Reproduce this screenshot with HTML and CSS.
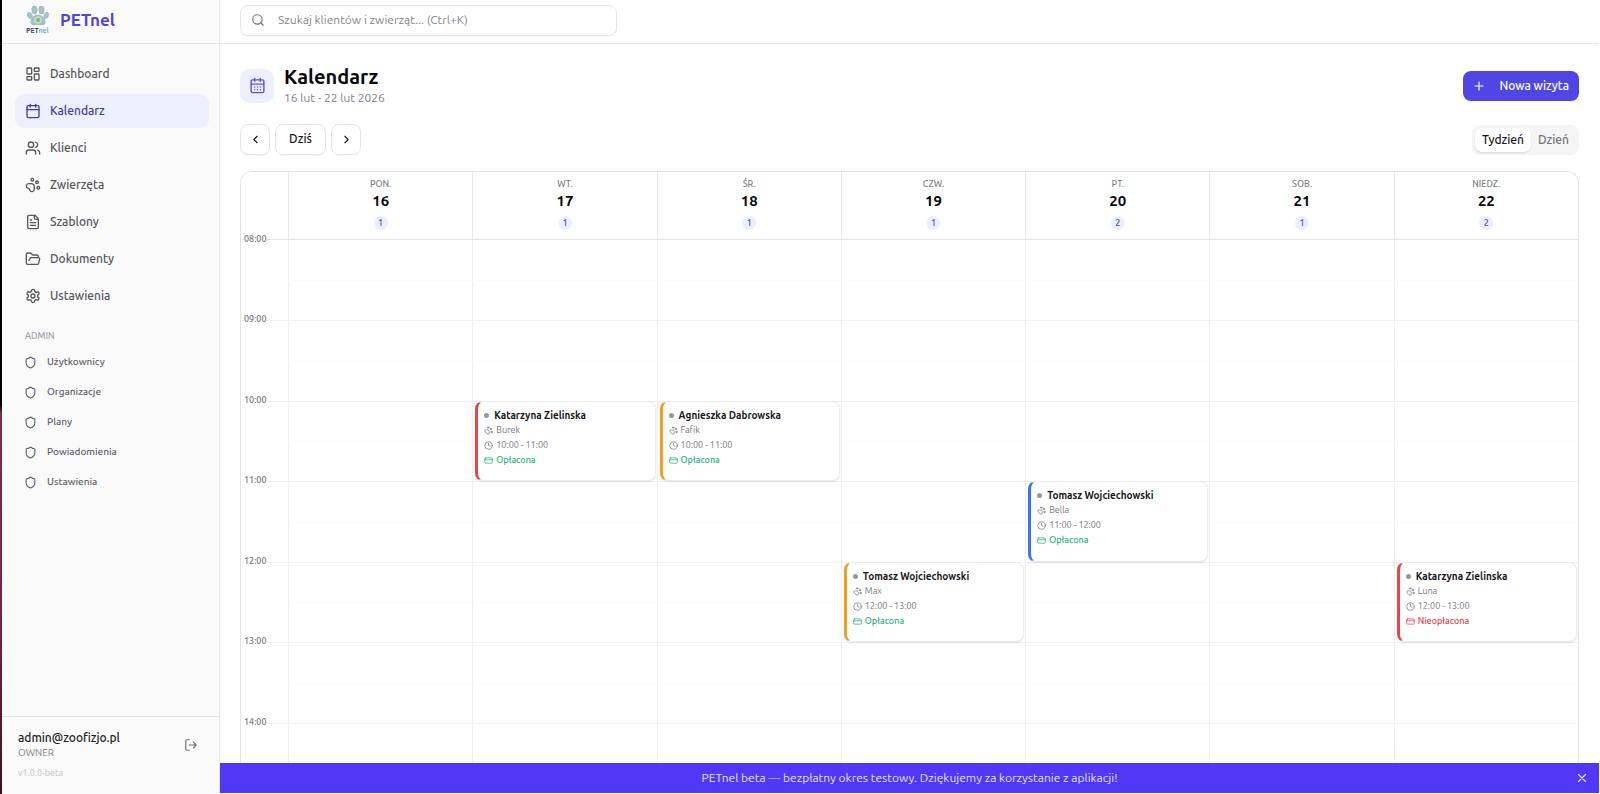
FILE: index.html
```html
<!DOCTYPE html>
<html lang="pl">
<head>
<meta charset="utf-8">
<meta name="viewport" content="width=device-width, initial-scale=1">
<title>PETnel – Kalendarz</title>
<link rel="stylesheet" href="styles.css">
</head>
<body>
<svg class="sprite" aria-hidden="true">
  <symbol id="i-dashboard" viewBox="0 0 24 24"><rect x="3" y="3" width="7" height="9" rx="1"/><rect x="14" y="3" width="7" height="5" rx="1"/><rect x="14" y="12" width="7" height="9" rx="1"/><rect x="3" y="16" width="7" height="5" rx="1"/></symbol>
  <symbol id="i-calendar" viewBox="0 0 24 24"><path d="M8 2v4M16 2v4M3 10h18"/><rect x="3" y="4" width="18" height="18" rx="2"/></symbol>
  <symbol id="i-days" viewBox="0 0 24 24"><path d="M8 2v4M16 2v4M3 10h18"/><rect x="3" y="4" width="18" height="18" rx="2"/><path d="M8 14h.01M12 14h.01M16 14h.01M8 18h.01M12 18h.01M16 18h.01"/></symbol>
  <symbol id="i-users" viewBox="0 0 24 24"><path d="M16 21v-2a4 4 0 0 0-4-4H6a4 4 0 0 0-4 4v2"/><circle cx="9" cy="7" r="4"/><path d="M22 21v-2a4 4 0 0 0-3-3.87M16 3.13a4 4 0 0 1 0 7.75"/></symbol>
  <symbol id="i-paw" viewBox="0 0 24 24"><circle cx="11" cy="4" r="2"/><circle cx="18" cy="8" r="2"/><circle cx="20" cy="16" r="2"/><path d="M9 10a5 5 0 0 1 5 5v3.500a3.500 3.500 0 0 1-6.840 1.045Q6.520 17.480 4.460 16.840A3.500 3.500 0 0 1 5.500 10Z"/></symbol>
  <symbol id="i-file" viewBox="0 0 24 24"><path d="M15 2H6a2 2 0 0 0-2 2v16a2 2 0 0 0 2 2h12a2 2 0 0 0 2-2V7Z"/><path d="M14 2v4a2 2 0 0 0 2 2h4M10 9H8M16 13H8M16 17H8"/></symbol>
  <symbol id="i-folder" viewBox="0 0 24 24"><path d="m6 14 1.500-2.900A2 2 0 0 1 9.240 10H20a2 2 0 0 1 1.940 2.500l-1.540 6a2 2 0 0 1-1.950 1.500H4a2 2 0 0 1-2-2V5a2 2 0 0 1 2-2h3.900a2 2 0 0 1 1.690.9l.81 1.200a2 2 0 0 0 1.670.9H18a2 2 0 0 1 2 2v2"/></symbol>
  <symbol id="i-gear" viewBox="0 0 24 24"><path d="M12.220 2h-.44a2 2 0 0 0-2 2v.18a2 2 0 0 1-1 1.730l-.43.25a2 2 0 0 1-2 0l-.15-.08a2 2 0 0 0-2.730.73l-.22.38a2 2 0 0 0 .73 2.730l.15.1a2 2 0 0 1 1 1.720v.51a2 2 0 0 1-1 1.740l-.15.09a2 2 0 0 0-.73 2.730l.22.38a2 2 0 0 0 2.730.73l.15-.08a2 2 0 0 1 2 0l.43.25a2 2 0 0 1 1 1.730V20a2 2 0 0 0 2 2h.44a2 2 0 0 0 2-2v-.18a2 2 0 0 1 1-1.730l.43-.25a2 2 0 0 1 2 0l.15.08a2 2 0 0 0 2.730-.73l.22-.39a2 2 0 0 0-.73-2.730l-.15-.08a2 2 0 0 1-1-1.740v-.5a2 2 0 0 1 1-1.740l.15-.09a2 2 0 0 0 .73-2.730l-.22-.38a2 2 0 0 0-2.730-.73l-.15.08a2 2 0 0 1-2 0l-.43-.25a2 2 0 0 1-1-1.730V4a2 2 0 0 0-2-2z"/><circle cx="12" cy="12" r="3"/></symbol>
  <symbol id="i-shield" viewBox="0 0 24 24"><path d="M20 13c0 5-3.500 7.500-7.660 8.950a1 1 0 0 1-.67-.01C7.500 20.500 4 18 4 13V6a1 1 0 0 1 1-1c2 0 4.500-1.200 6.240-2.720a1.170 1.170 0 0 1 1.520 0C14.510 3.810 17 5 19 5a1 1 0 0 1 1 1z"/></symbol>
  <symbol id="i-logout" viewBox="0 0 24 24"><path d="M9 21H5a2 2 0 0 1-2-2V5a2 2 0 0 1 2-2h4M16 17l5-5-5-5M21 12H9"/></symbol>
  <symbol id="i-search" viewBox="0 0 24 24"><circle cx="11" cy="11" r="8"/><path d="m21 21-4.300-4.300"/></symbol>
  <symbol id="i-left" viewBox="0 0 24 24"><path d="m15 18-6-6 6-6"/></symbol>
  <symbol id="i-right" viewBox="0 0 24 24"><path d="m9 18 6-6-6-6"/></symbol>
  <symbol id="i-plus" viewBox="0 0 24 24"><path d="M5 12h14M12 5v14"/></symbol>
  <symbol id="i-close" viewBox="0 0 24 24"><path d="M18 6 6 18M6 6l12 12"/></symbol>
  <symbol id="i-clock" viewBox="0 0 24 24"><circle cx="12" cy="12" r="10"/><path d="M12 6v6l4 2"/></symbol>
  <symbol id="i-card" viewBox="0 0 24 24"><rect x="2" y="5" width="20" height="14" rx="2"/><path d="M2 10h20"/></symbol>
</svg>
<div class="app">
  <div class="edge"></div>
  <aside class="sidebar">
    <div class="brand">
      <svg class="logo" viewBox="0 0 24 30" role="img" aria-label="PETnel">
        <defs><linearGradient id="paw" x1="0" y1="0" x2="1" y2="1"><stop offset="0" stop-color="#a3b0c8"/><stop offset=".5" stop-color="#a9c5c4"/><stop offset="1" stop-color="#94b9cf"/></linearGradient></defs>
        <g fill="url(#paw)"><ellipse cx="8.500" cy="5" rx="3" ry="4.200"/><ellipse cx="15.500" cy="5" rx="3" ry="4.200"/><ellipse cx="3.800" cy="10.500" rx="2.600" ry="3.600" transform="rotate(-25 3.800 10.500)"/><ellipse cx="20.200" cy="10.500" rx="2.600" ry="3.600" transform="rotate(25 20.200 10.500)"/><path d="M12 9.500c4 0 7.500 4 7.500 7.500 0 2.600-2 3.500-4 3.300-1.300-.2-2.200-.3-3.500-.3s-2.200.1-3.500.3c-2 .2-4-.7-4-3.300 0-3.500 3.500-7.500 7.500-7.500z"/></g>
        <circle cx="12" cy="15" r="3.800" fill="#c3dac8"/><circle cx="12" cy="15" r="2" fill="#7fb98b"/>
        <text class="logo-text" x="0" y="28"><tspan fill="#3c4668">PET</tspan><tspan fill="#69b5bd">nel</tspan></text>
      </svg>
      <span class="brand-name">PETnel</span>
    </div>
    <nav class="nav">
      <a class="nav-item" href="#"><svg class="icon i16"><use href="#i-dashboard"/></svg>Dashboard</a>
      <a class="nav-item active" href="#" aria-current="page"><svg class="icon i16"><use href="#i-calendar"/></svg>Kalendarz</a>
      <a class="nav-item" href="#"><svg class="icon i16"><use href="#i-users"/></svg>Klienci</a>
      <a class="nav-item" href="#"><svg class="icon i16"><use href="#i-paw"/></svg>Zwierzęta</a>
      <a class="nav-item" href="#"><svg class="icon i16"><use href="#i-file"/></svg>Szablony</a>
      <a class="nav-item" href="#"><svg class="icon i16"><use href="#i-folder"/></svg>Dokumenty</a>
      <a class="nav-item" href="#"><svg class="icon i16"><use href="#i-gear"/></svg>Ustawienia</a>
    </nav>
    <h2 class="nav-label">ADMIN</h2>
    <nav class="subnav">
      <a class="sub-item" href="#"><svg class="icon i13"><use href="#i-shield"/></svg>Użytkownicy</a>
      <a class="sub-item" href="#"><svg class="icon i13"><use href="#i-shield"/></svg>Organizacje</a>
      <a class="sub-item" href="#"><svg class="icon i13"><use href="#i-shield"/></svg>Plany</a>
      <a class="sub-item" href="#"><svg class="icon i13"><use href="#i-shield"/></svg>Powiadomienia</a>
      <a class="sub-item" href="#"><svg class="icon i13"><use href="#i-shield"/></svg>Ustawienia</a>
    </nav>
    <footer class="account">
      <div class="account-row">
        <div><p class="email">admin@zoofizjo.pl</p><p class="role">OWNER</p></div>
        <button class="logout" type="button" aria-label="Wyloguj"><svg class="icon i14"><use href="#i-logout"/></svg></button>
      </div>
      <p class="version">v1.0.0-beta</p>
    </footer>
  </aside>
  <div class="page">
    <header class="topbar">
      <label class="search"><svg class="icon i14"><use href="#i-search"/></svg><input type="search" aria-label="Szukaj" placeholder="Szukaj klientów i zwierząt... (Ctrl+K)"></label>
    </header>
    <main class="content">
      <div class="title-row">
        <span class="title-icon"><svg class="icon i17"><use href="#i-days"/></svg></span>
        <div class="title-text"><h1 class="title">Kalendarz</h1><p class="range">16 lut - 22 lut 2026</p></div>
        <button class="primary" type="button"><svg class="icon i14"><use href="#i-plus"/></svg>Nowa wizyta</button>
      </div>
      <div class="toolbar">
        <button class="btn square" type="button" aria-label="Poprzedni"><svg class="icon i13"><use href="#i-left"/></svg></button>
        <button class="btn" type="button">Dziś</button>
        <button class="btn square" type="button" aria-label="Następny"><svg class="icon i13"><use href="#i-right"/></svg></button>
        <div class="toggle"><button class="seg on" type="button">Tydzień</button><button class="seg" type="button">Dzień</button></div>
      </div>
      <section class="calendar">
        <div class="days">
          <div class="day corner"></div>
          <div class="day"><span class="dow">PON.</span><span class="num">16</span><span class="count">1</span></div>
          <div class="day"><span class="dow">WT.</span><span class="num">17</span><span class="count">1</span></div>
          <div class="day"><span class="dow">ŚR.</span><span class="num">18</span><span class="count">1</span></div>
          <div class="day"><span class="dow">CZW.</span><span class="num">19</span><span class="count">1</span></div>
          <div class="day"><span class="dow">PT.</span><span class="num">20</span><span class="count">2</span></div>
          <div class="day"><span class="dow">SOB.</span><span class="num">21</span><span class="count">1</span></div>
          <div class="day"><span class="dow">NIEDZ.</span><span class="num">22</span><span class="count">2</span></div>
        </div>
        <div class="hours">
          <div class="column c1"></div><div class="column c2"></div><div class="column c3"></div><div class="column c4"></div><div class="column c5"></div><div class="column c6"></div><div class="column c7"></div>
          <div class="line half r2"></div><div class="line r3"></div><div class="line half r4"></div><div class="line r5"></div><div class="line half r6"></div><div class="line r7"></div><div class="line half r8"></div><div class="line r9"></div><div class="line half r10"></div><div class="line r11"></div><div class="line half r12"></div><div class="line r13"></div>
          <time class="hour r1">08:00</time><time class="hour r3">09:00</time><time class="hour r5">10:00</time><time class="hour r7">11:00</time><time class="hour r9">12:00</time><time class="hour r11">13:00</time><time class="hour r13">14:00</time>
          <article class="event red d2 r5">
            <h3 class="client">Katarzyna Zielinska</h3>
            <p class="meta"><svg class="icon i9"><use href="#i-paw"/></svg>Burek</p>
            <p class="meta"><svg class="icon i9"><use href="#i-clock"/></svg>10:00 - 11:00</p>
            <p class="meta paid"><svg class="icon i9"><use href="#i-card"/></svg>Opłacona</p>
          </article>
          <article class="event amber d3 r5">
            <h3 class="client">Agnieszka Dabrowska</h3>
            <p class="meta"><svg class="icon i9"><use href="#i-paw"/></svg>Fafik</p>
            <p class="meta"><svg class="icon i9"><use href="#i-clock"/></svg>10:00 - 11:00</p>
            <p class="meta paid"><svg class="icon i9"><use href="#i-card"/></svg>Opłacona</p>
          </article>
          <article class="event amber d4 r9">
            <h3 class="client">Tomasz Wojciechowski</h3>
            <p class="meta"><svg class="icon i9"><use href="#i-paw"/></svg>Max</p>
            <p class="meta"><svg class="icon i9"><use href="#i-clock"/></svg>12:00 - 13:00</p>
            <p class="meta paid"><svg class="icon i9"><use href="#i-card"/></svg>Opłacona</p>
          </article>
          <article class="event blue d5 r7">
            <h3 class="client">Tomasz Wojciechowski</h3>
            <p class="meta"><svg class="icon i9"><use href="#i-paw"/></svg>Bella</p>
            <p class="meta"><svg class="icon i9"><use href="#i-clock"/></svg>11:00 - 12:00</p>
            <p class="meta paid"><svg class="icon i9"><use href="#i-card"/></svg>Opłacona</p>
          </article>
          <article class="event red d7 r9">
            <h3 class="client">Katarzyna Zielinska</h3>
            <p class="meta"><svg class="icon i9"><use href="#i-paw"/></svg>Luna</p>
            <p class="meta"><svg class="icon i9"><use href="#i-clock"/></svg>12:00 - 13:00</p>
            <p class="meta unpaid"><svg class="icon i9"><use href="#i-card"/></svg>Nieopłacona</p>
          </article>
        </div>
      </section>
    </main>
    <div class="banner" role="status">
      <p class="banner-text">PETnel beta — bezpłatny okres testowy. Dziękujemy za korzystanie z aplikacji!</p>
      <button class="close" type="button" aria-label="Zamknij"><svg class="icon i14"><use href="#i-close"/></svg></button>
    </div>
  </div>
</div>
</body>
</html>
```
FILE: styles.css
```css
* { box-sizing: border-box; margin: 0; padding: 0; }
body { font-family: Ubuntu, "Noto Sans", "Open Sans", sans-serif; font-size: 12px; line-height: 16px; color: #18181b; background: #fff; }
button, input { font: inherit; color: inherit; background: none; border: 0; }
button { cursor: pointer; }
a { color: inherit; text-decoration: none; }

.sprite { position: absolute; width: 0; height: 0; }
.icon { flex: none; fill: none; stroke: currentColor; stroke-width: 2; stroke-linecap: round; stroke-linejoin: round; }
.i9 { width: 9px; height: 9px; }
.i13 { width: 13px; height: 13px; }
.i14 { width: 14px; height: 14px; }
.i16 { width: 16px; height: 16px; }
.i17 { width: 17px; height: 17px; }

.app { display: flex; height: 100vh; min-height: 560px; }
.edge { flex: none; width: 2px; background: linear-gradient(#000 0 51%, #7d2c50 52%, #702546 80%, #3c1024); }

.sidebar { display: flex; flex-direction: column; flex: none; width: 218px; background: #fafafa; border-right: 1px solid #e6e6e8; }
.brand { display: flex; align-items: center; gap: 10px; height: 44px; padding: 0 24px 4px; border-bottom: 1px solid #e6e6e8; }
.logo { width: 24px; height: 30px; }
.logo-text { font-size: 7px; font-weight: 700; }
.brand-name { font-size: 17px; line-height: 24px; font-weight: 600; color: #5046d8; }
.nav { display: flex; flex-direction: column; gap: 3px; padding: 13px 10px 0 13px; }
.nav-item { display: flex; align-items: center; gap: 9px; height: 34px; padding: 0 10px 1px; border-radius: 9px; font-weight: 500; color: #56565c; }
.nav-item.active { background: #ecf0fe; color: #443ba8; }
.nav-label { padding: 15px 23px 3px; font-size: 9px; line-height: 16px; font-weight: 500; color: #a0a0a6; }
.subnav { display: flex; flex-direction: column; padding: 0 10px 0 13px; }
.sub-item { display: flex; align-items: center; gap: 10px; height: 30px; padding: 0 9px; font-size: 10px; font-weight: 500; color: #606066; }
.account { margin-top: auto; padding: 12px 17px 14px 16px; border-top: 1px solid #e6e6e8; }
.account-row { display: flex; align-items: center; justify-content: space-between; }
.email { font-weight: 500; line-height: 17px; color: #202024; }
.role { font-size: 10px; line-height: 14px; color: #808086; }
.logout { display: flex; padding: 4px; color: #707076; }
.version { margin-top: 6px; font-size: 9px; line-height: 14px; color: #c2c2c7; }

.page { display: flex; flex-direction: column; flex: 1; min-width: 0; padding: 0 1px 1px 0; }
.topbar { flex: none; height: 44px; padding: 5px 20px 0; border-bottom: 1px solid #e6e6e8; }
.search { display: flex; align-items: center; gap: 13px; max-width: 377px; height: 31px; padding: 0 10px 1px; border: 1px solid #e6e6e8; border-radius: 8px; color: #77777d; box-shadow: 0 1px 1px #00000008; }
.search input { flex: 1; min-width: 0; outline: 0; }
.search input::placeholder { color: #85858b; opacity: 1; }

.content { display: flex; flex-direction: column; flex: 1; min-height: 0; padding: 21px 20px 0; overflow: hidden; }
.title-row { display: flex; align-items: center; gap: 10px; }
.title-icon { display: flex; align-items: center; justify-content: center; width: 34px; height: 34px; border-radius: 10px; background: #ecf0fe; color: #5c50e0; }
.title { font-size: 20px; line-height: 24px; font-weight: 700; color: #09090b; }
.range { font-size: 12px; line-height: 17px; color: #808086; }
.primary { display: flex; align-items: center; gap: 13px; height: 30px; margin-left: auto; padding: 0 10px 0 9px; border-radius: 8px; background: #4f46e5; color: #fff; font-weight: 500; }
.toolbar { display: flex; align-items: center; gap: 5px; margin-top: 18px; }
.btn { display: flex; align-items: center; justify-content: center; min-width: 51px; height: 31px; padding-bottom: 1px; border: 1px solid #e6e6e8; border-radius: 8px; font-weight: 500; box-shadow: 0 1px 1px #00000008; }
.square { min-width: 30px; }
.toggle { display: flex; margin-left: auto; padding: 3px; border-radius: 8px; background: #f5f5f6; }
.seg { height: 24px; padding: 0 7px; border-radius: 7px; font-weight: 500; color: #74747a; }
.seg.on { background: #fff; color: #18181b; box-shadow: 0 1px 2px #00000020; }

.calendar { display: flex; flex-direction: column; flex: 1; min-height: 0; margin-top: 16px; border: 1px solid #e4e4e7; border-width: 1px 1px 0; border-radius: 12px 12px 0 0; }
.days, .hours { display: grid; grid-template-columns: 47px repeat(7, minmax(0, 1fr)); }
.day { display: flex; flex-direction: column; align-items: center; height: 68px; padding-top: 6px; border-left: 1px solid #e8e8ea; border-bottom: 1px solid #e4e4e7; }
.corner { border-left: 0; }
.dow { font-size: 9px; line-height: 13px; font-weight: 500; color: #808086; }
.num { font-size: 15px; line-height: 20px; font-weight: 700; color: #09090b; }
.count { min-width: 14px; margin-top: 5px; border-radius: 7px; background: #ecf0fe; color: #5046d8; font-size: 9px; line-height: 14px; font-weight: 500; text-align: center; }
.hours { flex: 1; min-height: 0; grid-template-rows: repeat(13, minmax(0, 1fr)); }
.column { grid-row: 1 / -1; border-left: 1px solid #efeff1; }
.line { grid-column: 1 / -1; border-top: 1px solid #f2f2f4; }
.half { grid-column: 2 / -1; border-color: #fbfbfc; }
.hour { grid-column: 1; justify-self: start; align-self: start; margin-top: -9px; margin-left: 3px; background: #fff; font-size: 9px; line-height: 16px; font-weight: 500; color: #77777d; }
.c1, .d1 { grid-column: 2; }
.c2, .d2 { grid-column: 3; }
.c3, .d3 { grid-column: 4; }
.c4, .d4 { grid-column: 5; }
.c5, .d5 { grid-column: 6; }
.c6, .d6 { grid-column: 7; }
.c7, .d7 { grid-column: 8; }
.r1 { grid-row: 1; }
.r2 { grid-row: 2; }
.r3 { grid-row: 3; }
.r4 { grid-row: 4; }
.r5 { grid-row: 5; }
.r6 { grid-row: 6; }
.r7 { grid-row: 7; }
.r8 { grid-row: 8; }
.r9 { grid-row: 9; }
.r10 { grid-row: 10; }
.r11 { grid-row: 11; }
.r12 { grid-row: 12; }
.r13 { grid-row: 13; }
.event { grid-row-end: span 2; margin: 0 1px 0 3px; padding: 6px; border: 1px solid #ececee; border-left: 3px solid; border-radius: 8px; background: #fff; box-shadow: 0 1px 2px #00000018; overflow: hidden; }
.event.red { border-left-color: #e0484d; }
.event.amber { border-left-color: #f0a020; }
.event.blue { border-left-color: #3b76f0; }
.client { display: flex; align-items: center; gap: 5px; font-size: 10px; line-height: 15px; font-weight: 600; white-space: nowrap; }
.client::before { content: ""; width: 5px; height: 5px; border-radius: 50%; background: #94989f; }
.meta { display: flex; align-items: center; gap: 3px; font-size: 9px; line-height: 15px; color: #77777d; }
.paid { color: #22b47c; font-weight: 500; }
.unpaid { color: #e8404c; font-weight: 500; }

.banner { display: flex; align-items: center; flex: none; height: 30px; padding: 0 10px 0 24px; background: #4f39f6; color: #e6e3ff; }
.banner-text { flex: 1; text-align: center; }
.close { display: flex; }
```
